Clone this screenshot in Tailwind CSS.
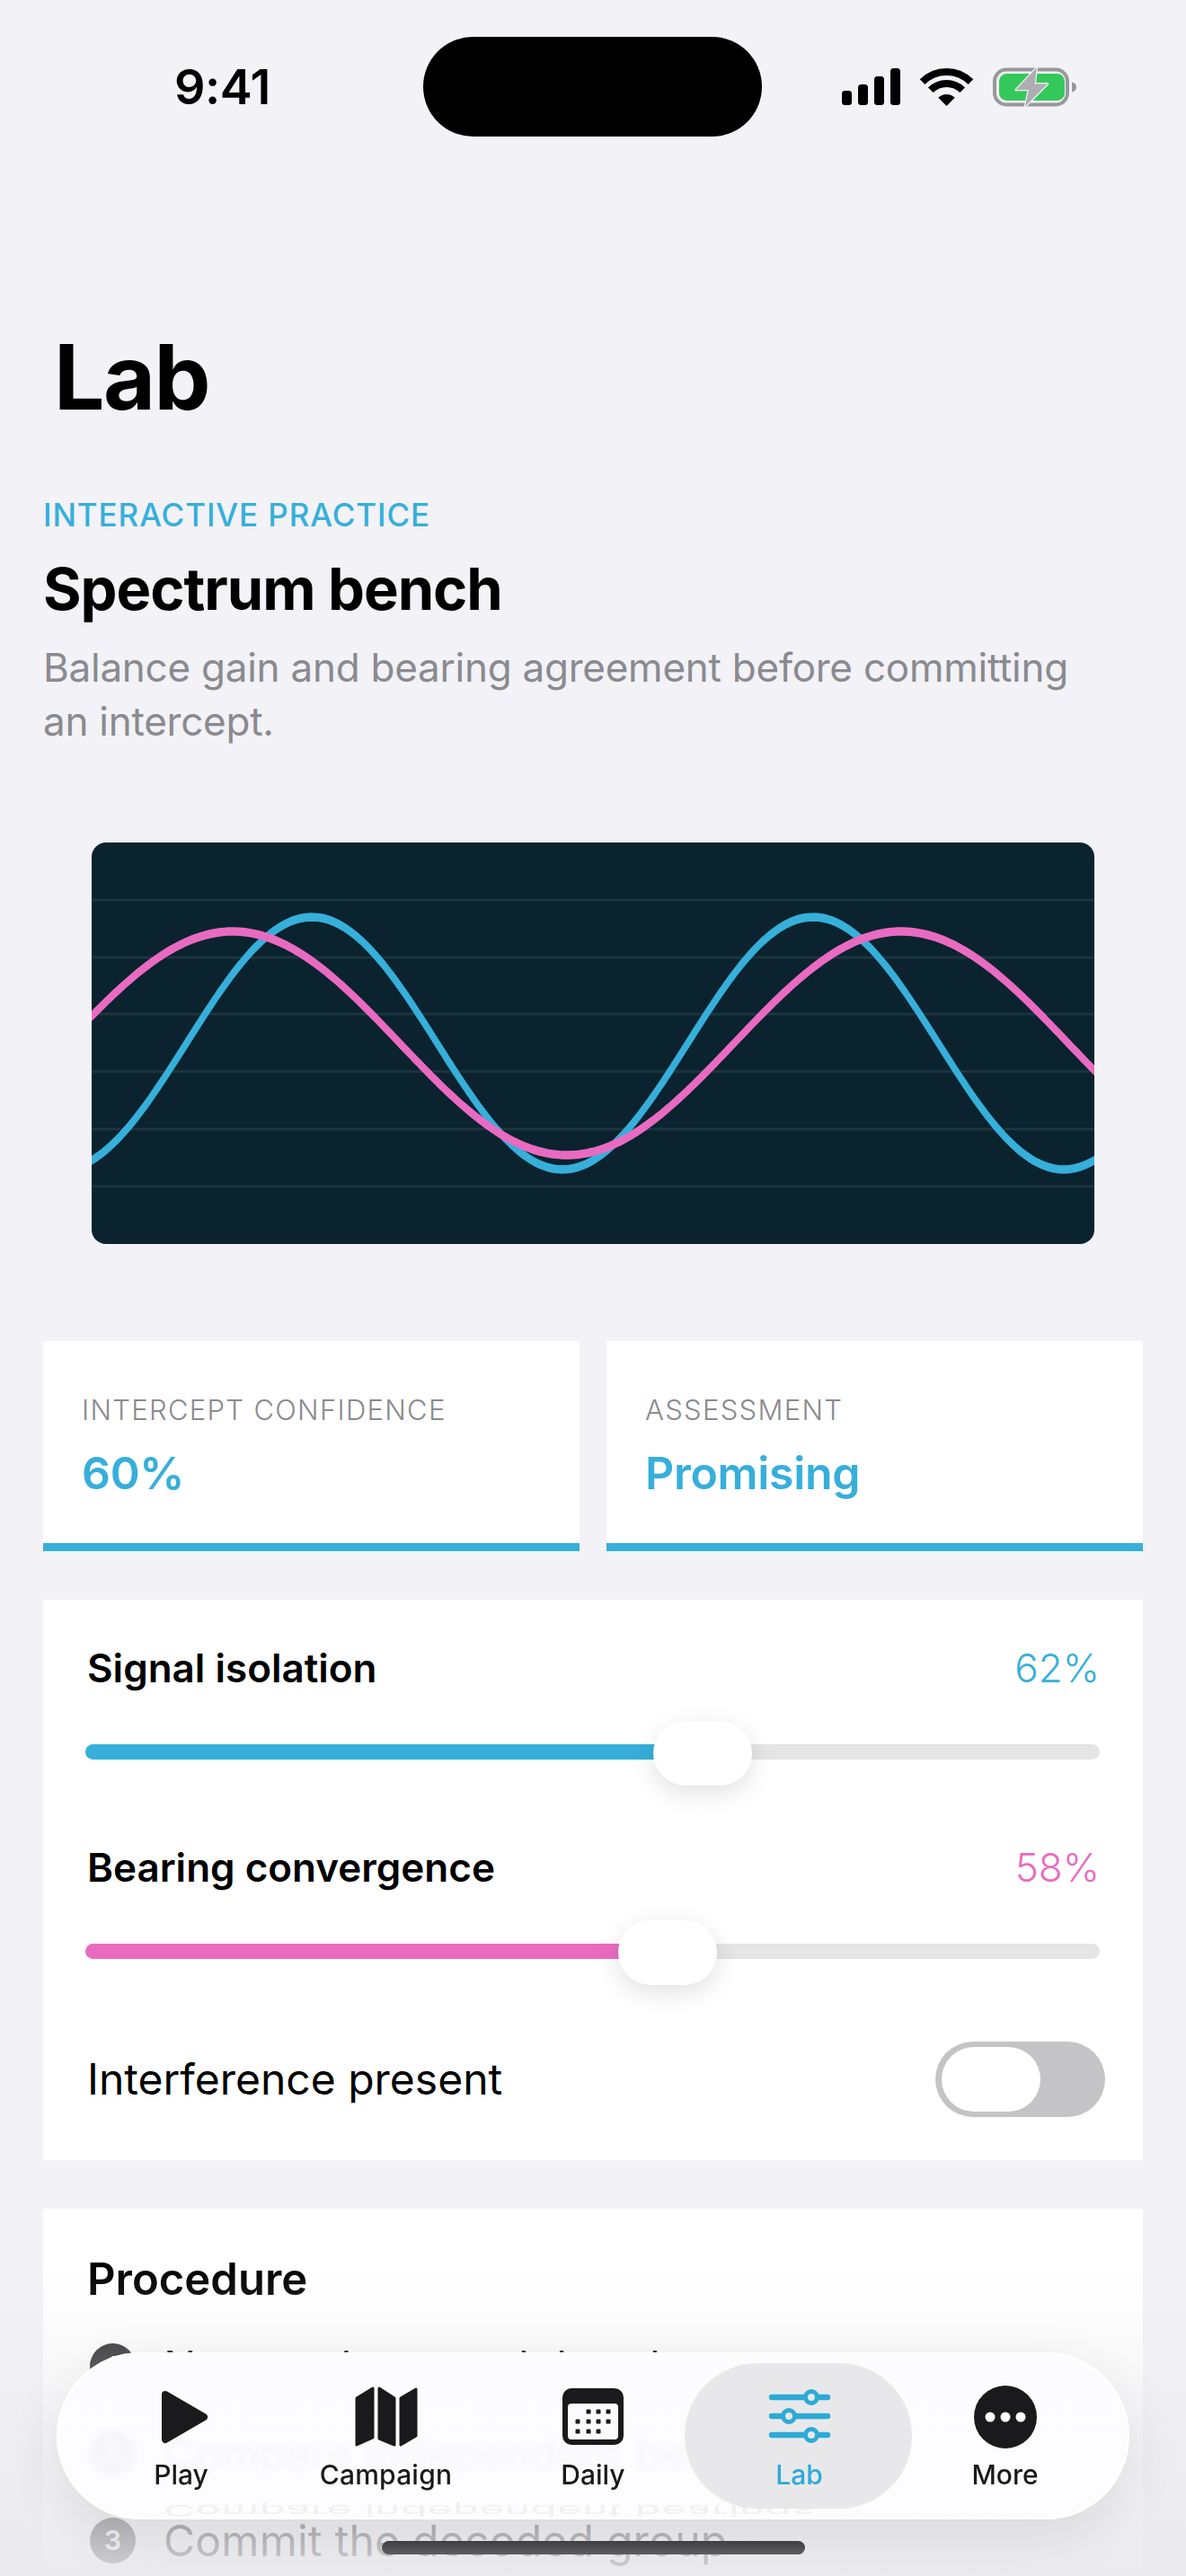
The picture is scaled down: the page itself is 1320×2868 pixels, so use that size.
<!DOCTYPE html>
<html lang="en">
<head>
    <title>Lab</title>
    <meta charset="UTF-8">
    <meta name="viewport" content="width=device-width, initial-scale=1.0">
    <script src="https://cdn.jsdelivr.net/npm/@tailwindcss/browser@4"></script>
</head>
<body class="bg-[#f2f2f7] font-['Inter','Noto_Sans',sans-serif] text-black">
    <div class="relative h-[2868px] w-[1320px] overflow-hidden">

        <!-- Status bar -->
        <div class="flex h-[152px] items-end">
            <div class="flex h-[111px] w-full items-center">
                <div class="ml-[194px] w-[277px] text-[54px] leading-none font-semibold tracking-[-0.5px]">9:41</div>
                <div class="h-[111px] w-[377px] rounded-full bg-black"></div>
                <div class="ml-[89px] flex items-center">
                    <svg class="h-[42px] w-[65px]" viewBox="0 0 65 42" fill="#000">
                        <rect x="0" y="25" width="11" height="16" rx="3.5"/>
                        <rect x="18" y="18" width="11" height="23" rx="3.5"/>
                        <rect x="36" y="9" width="11" height="32" rx="3.5"/>
                        <rect x="54" y="0" width="11" height="41" rx="3.5"/>
                    </svg>
                    <svg class="ml-[23px] h-[42px] w-[57px] overflow-visible" viewBox="0 0 57 42" fill="none" stroke="#000" stroke-width="8">
                        <path d="M1.6 15.1A38 38 0 0 1 55.4 15.1"/>
                        <path d="M10.8 24.3A25 25 0 0 1 46.2 24.3"/>
                        <path d="M28.5 42L19.3 32.8A13 13 0 0 1 37.7 32.8Z" fill="#000" stroke="none"/>
                    </svg>
                    <svg class="ml-[23px] h-[46px] w-[93px] overflow-visible" viewBox="0 0 93 46" fill="none">
                        <rect x="2" y="3.5" width="81" height="39" rx="13" stroke="#98989c" stroke-width="4"/>
                        <rect x="7" y="8" width="73" height="30" rx="8.5" fill="#34c759"/>
                        <path d="M88 17.5c3 .5 5 2.5 5 5.5s-2 5-5 5.5z" fill="#98989c"/>
                        <path d="M49 1L25.7 26H40L35.7 45L61 19.3H46.7Z" fill="#aeaeb2" stroke="#f2f2f7" stroke-width="2.5" stroke-linejoin="round" paint-order="stroke"/>
                    </svg>
                </div>
            </div>
        </div>

        <!-- Large title -->
        <h1 class="mt-[208px] ml-[60px] h-[120px] text-[100px] leading-[120px] font-bold tracking-[-1.5px]">Lab</h1>

        <main class="px-[48px]">
            <div class="mt-[73px] h-[40px] text-[35px] leading-[40px] font-medium tracking-[0.9px] text-[#36afda]">INTERACTIVE PRACTICE</div>
            <h2 class="mt-[23px] h-[80px] text-[65px] leading-[80px] font-bold tracking-[-1px]">Spectrum bench</h2>
            <p class="mt-[17px] w-[1180px] text-[44px] leading-[60px] tracking-[-0.25px] text-[#8a8a8f]">Balance gain and bearing agreement before committing an intercept.</p>

            <!-- Waveform: stretched viewBox, the traces are thicker at crests than on slopes -->
            <div class="mx-[54px] mt-[105px] h-[447px] overflow-hidden rounded-2xl bg-[#0a232e]">
                <svg class="block h-full w-full" viewBox="0 0 171.7 47.05" preserveAspectRatio="none" fill="none">
                    <path stroke="#1c3540" stroke-width="0.3" d="M0 6.74H172M0 13.47H172M0 20.1H172M0 26.84H172M0 33.58H172M0 40.3H172"/>
                    <path id="wave-blue" stroke="#36afda" stroke-width="1"/>
                    <path id="wave-pink" stroke="#e96bc1" stroke-width="1"/>
                </svg>
            </div>

            <!-- Stats -->
            <div class="mt-[108px] grid grid-cols-2 gap-[30px]">
                <div class="h-[234px] border-b-[9px] border-[#36afda] bg-white pt-[57px] pl-[43px]">
                    <div class="h-[40px] text-[31px] leading-[40px] font-light tracking-[1.3px] text-[#8a8a8e]">INTERCEPT CONFIDENCE</div>
                    <div class="mt-[20px] h-[60px] text-[50px] leading-[60px] font-semibold tracking-[-0.3px] text-[#36afda]">60%</div>
                </div>
                <div class="h-[234px] border-b-[9px] border-[#36afda] bg-white pt-[57px] pl-[43px]">
                    <div class="h-[40px] text-[31px] leading-[40px] font-light tracking-[1.3px] text-[#8a8a8e]">ASSESSMENT</div>
                    <div class="mt-[20px] h-[60px] text-[50px] leading-[60px] font-semibold tracking-[-0.3px] text-[#36afda]">Promising</div>
                </div>
            </div>

            <!-- Controls -->
            <div class="mt-[54px] h-[624px] bg-white pt-[51px] pr-[48px] pl-[47px]">
                <div class="flex h-[50px] items-center justify-between">
                    <span class="ml-[2px] text-[44px] leading-[50px] font-semibold">Signal isolation</span>
                    <span class="text-[44px] leading-[50px] font-light text-[#36afda]">62%</span>
                </div>
                <div class="relative mt-[34px] h-[72px] pt-[26px]">
                    <div class="h-[17px] w-full overflow-hidden rounded-full bg-[#e5e5e5]">
                        <div class="h-full w-[640px] bg-[#36afda]"></div>
                    </div>
                    <div class="absolute top-0 left-[632px] h-[72px] w-[110px] rounded-full bg-white shadow-[0_8px_28px_rgba(0,0,0,0.12)]"></div>
                </div>
                <div class="mt-[66px] flex h-[50px] items-center justify-between">
                    <span class="ml-[2px] text-[44px] leading-[50px] font-semibold">Bearing convergence</span>
                    <span class="text-[44px] leading-[50px] font-light text-[#e96bc1]">58%</span>
                </div>
                <div class="relative mt-[34px] h-[72px] pt-[26px]">
                    <div class="h-[17px] w-full overflow-hidden rounded-full bg-[#e5e5e5]">
                        <div class="h-full w-[600px] bg-[#e96bc1]"></div>
                    </div>
                    <div class="absolute top-0 left-[593px] h-[72px] w-[110px] rounded-full bg-white shadow-[0_8px_28px_rgba(0,0,0,0.12)]"></div>
                </div>
                <div class="mt-[63px] flex h-[84px] items-center justify-between">
                    <span class="ml-[2px] text-[48px] leading-[60px]">Interference present</span>
                    <div class="-mr-[6px] h-[84px] w-[189px] rounded-full bg-[#c4c4c6] py-[6px] pl-[7px]">
                        <div class="h-[72px] w-[110px] rounded-full bg-white"></div>
                    </div>
                </div>
            </div>

            <!-- Procedure -->
            <div class="mt-[54px] h-[500px] bg-white pt-[49px] pl-[52px]">
                <h3 class="-ml-[3px] h-[60px] text-[49px] leading-[60px] font-semibold">Procedure</h3>
                <ol class="mt-[41px] flex flex-col gap-[46px]">
                    <li class="flex h-[51px] items-center gap-[31px]">
                        <span class="flex h-[51px] w-[51px] items-center justify-center rounded-full bg-[#1c1c1e] text-[30px] font-semibold text-white">1</span>
                        <span class="text-[48px] leading-[60px] tracking-[0.25px]">Narrow the search band</span>
                    </li>
                    <li class="flex h-[51px] items-center gap-[31px]">
                        <span class="flex h-[51px] w-[51px] items-center justify-center rounded-full bg-[#1c1c1e] text-[30px] font-semibold text-white">2</span>
                        <span class="text-[48px] leading-[60px] tracking-[0.25px]">Compare independent bearings</span>
                    </li>
                    <li class="flex h-[51px] items-center gap-[31px]">
                        <span class="flex h-[51px] w-[51px] items-center justify-center rounded-full bg-[#1c1c1e] text-[30px] font-semibold text-white">3</span>
                        <span class="text-[48px] leading-[60px] tracking-[0.25px]">Commit the decoded group</span>
                    </li>
                </ol>
            </div>
        </main>

        <!-- Scroll fade under the tab bar -->
        <div class="absolute inset-x-0 top-[2520px] bottom-0 bg-linear-to-b from-[#e9e9ed]/0 to-[#e9e9ed]/90"></div>

        <!-- Tab bar -->
        <nav class="absolute top-[2619px] left-[63px] h-[186px] w-[1194px] overflow-hidden rounded-[93px] bg-linear-to-b from-[#fcfcfe] from-[28%] to-[#fcfcfe]/95 to-[48%] shadow-[0_18px_60px_rgba(0,0,0,0.09)] ring-[3px] ring-white/70 ring-inset backdrop-blur-[3px]">
            <div aria-hidden="true" class="absolute top-[181px] left-[119px] origin-top text-[48px] leading-[30px] tracking-[0.25px] whitespace-nowrap text-black/[0.05] [transform:scaleY(-0.35)]">Compare independent bearings</div>
            <div class="relative flex h-full pt-[37px] pl-[25px]">
                <div class="flex w-[227px] flex-col items-center text-[#1a1a1c]">
                    <svg class="h-[70px] w-[70px]" viewBox="0 0 70 70" fill="currentColor" stroke="currentColor" stroke-width="8" stroke-linejoin="round"><path d="M17 10L60 35L17 60Z"/></svg>
                    <span class="mt-[11px] h-[36px] text-[30px] leading-[36px] font-medium">Play</span>
                </div>
                <div class="flex w-[229px] flex-col items-center text-[#1a1a1c]">
                    <svg class="h-[70px] w-[70px]" viewBox="0 0 70 70" fill="currentColor" stroke="currentColor" stroke-width="3" stroke-linejoin="round">
                        <path d="M2 14L20 3V58L2 66Z"/>
                        <path d="M27 3L44 14V66L27 59Z"/>
                        <path d="M51 14L68 4V56L51 66Z"/>
                    </svg>
                    <span class="mt-[11px] h-[36px] text-[30px] leading-[36px] font-medium tracking-[0.2px]">Campaign</span>
                </div>
                <div class="flex w-[232px] flex-col items-center text-[#1a1a1c]">
                    <svg class="h-[70px] w-[70px]" viewBox="0 0 70 70" fill="currentColor">
                        <rect x="1" y="3" width="68" height="63" rx="10"/>
                        <rect x="7" y="20" width="56" height="40" rx="4" fill="#fbfbfd"/>
                        <rect x="27.5" y="26.5" width="5" height="5" rx="1.2"/><rect x="38.5" y="26.5" width="5" height="5" rx="1.2"/><rect x="49.5" y="26.5" width="5" height="5" rx="1.2"/>
                        <rect x="15.5" y="37.5" width="5" height="5" rx="1.2"/><rect x="27.5" y="37.5" width="5" height="5" rx="1.2"/><rect x="38.5" y="37.5" width="5" height="5" rx="1.2"/><rect x="49.5" y="37.5" width="5" height="5" rx="1.2"/>
                        <rect x="15.5" y="48.5" width="5" height="5" rx="1.2"/><rect x="27.5" y="48.5" width="5" height="5" rx="1.2"/><rect x="38.5" y="48.5" width="5" height="5" rx="1.2"/>
                    </svg>
                    <span class="mt-[11px] h-[36px] text-[30px] leading-[36px] font-medium">Daily</span>
                </div>
                <div class="relative flex w-[227px] flex-col items-center text-[#2daad6]">
                    <div class="absolute -top-[25px] -left-[14px] h-[162px] w-[253px] rounded-[81px] bg-[#e7e7ea]/95"></div>
                    <svg class="relative h-[70px] w-[70px]" viewBox="0 0 70 70" fill="none" stroke="currentColor" stroke-width="6.5" stroke-linecap="round">
                        <path d="M4 13H66M4 34H66M4 55H66"/>
                        <circle cx="48" cy="13" r="6.5" fill="#e8e8eb" stroke-width="5"/>
                        <circle cx="23" cy="34" r="6.5" fill="#e8e8eb" stroke-width="5"/>
                        <circle cx="48" cy="55" r="6.5" fill="#e8e8eb" stroke-width="5"/>
                    </svg>
                    <span class="relative mt-[11px] h-[36px] text-[30px] leading-[36px] font-medium">Lab</span>
                </div>
                <div class="flex w-[231px] flex-col items-center text-[#1a1a1c]">
                    <svg class="h-[70px] w-[70px]" viewBox="0 0 70 70">
                        <circle cx="35" cy="35" r="35" fill="currentColor"/>
                        <circle cx="18" cy="35" r="5.5" fill="#fff"/><circle cx="35" cy="35" r="5.5" fill="#fff"/><circle cx="52" cy="35" r="5.5" fill="#fff"/>
                    </svg>
                    <span class="mt-[11px] h-[36px] text-[30px] leading-[36px] font-medium">More</span>
                </div>
            </div>
        </nav>

        <!-- Home indicator -->
        <div class="absolute top-[2829px] left-[425px] h-[15px] w-[471px] rounded-full bg-linear-to-b from-[#3f3f41] to-[#5e5e60]"></div>
    </div>

    <script>
        // Two sine traces, given in chart pixels (peak x, period, amplitude), scaled to the viewBox
        function drawWave(id, peakX, period, amp) {
            let d = '';
            for (let x = -8; x <= 1124; x += 4) {
                const y = 223.5 - amp * Math.cos((x - peakX) / period * 2 * Math.PI);
                d += (x === -8 ? 'M' : 'L') + (x / 6.5).toFixed(2) + ' ' + (y / 9.5).toFixed(2);
            }
            document.getElementById(id).setAttribute('d', d);
        }
        drawWave('wave-blue', 245, 558, 140.5);
        drawWave('wave-pink', 157, 744, 124.5);
    </script>
</body>
</html>
